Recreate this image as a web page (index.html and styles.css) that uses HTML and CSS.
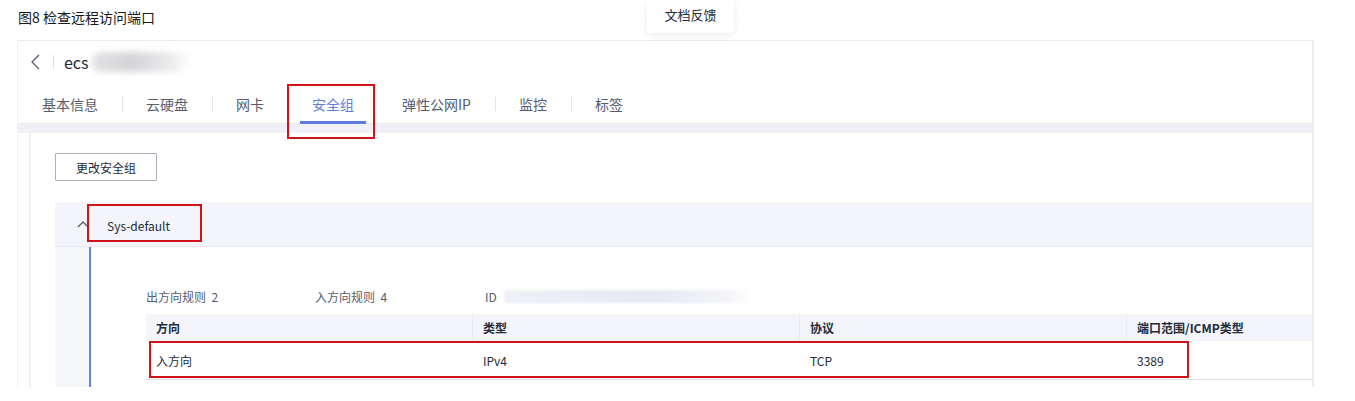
FILE: index.html
```html
<!DOCTYPE html>
<html>
<head>
<meta charset="utf-8">
<title>检查远程访问端口</title>
<link rel="stylesheet" href="styles.css">
</head>
<body>
  <div class="caption">图8 检查远程访问端口</div>
  <div class="feedback">文档反馈</div>

  <div class="frame">
    <div class="header">
      <div class="title-row">
        <svg class="back" width="12" height="16" viewBox="0 0 12 16"><path d="M9 1 L2 8 L9 15" fill="none" stroke="#575d6c" stroke-width="1.3"/></svg>
        <span class="title-divider"></span>
        <span class="ecs">ecs</span>
        <span class="blur-name"></span>
      </div>
      <div class="tabs">
        <span class="tab">基本信息</span>
        <span class="tab-divider"></span>
        <span class="tab">云硬盘</span>
        <span class="tab-divider"></span>
        <span class="tab">网卡</span>
        <span class="tab-divider hidden"></span>
        <span class="tab active">安全组</span>
        <span class="tab-divider hidden"></span>
        <span class="tab wide">弹性公网IP</span>
        <span class="tab-divider"></span>
        <span class="tab">监控</span>
        <span class="tab-divider"></span>
        <span class="tab">标签</span>
      </div>
    </div>

    <div class="band"></div>

    <div class="content">
      <button class="btn">更改安全组</button>

      <div class="group-head">
        <svg class="chevron" width="12" height="8" viewBox="0 0 12 8"><path d="M1 7 L6 2 L11 7" fill="none" stroke="#575d6c" stroke-width="1.4"/></svg>
        <span class="group-name">Sys-default</span>
      </div>

      <div class="group-body">
        <div class="group-inner">
          <div class="stats">
            <span class="stat stat-out">出方向规则&nbsp;&nbsp;2</span>
            <span class="stat stat-in">入方向规则&nbsp;&nbsp;4</span>
            <span class="stat">ID</span>
            <span class="blur-id"></span>
          </div>
          <div class="table">
            <div class="thead">
              <div class="cell">方向</div>
              <div class="cell">类型</div>
              <div class="cell">协议</div>
              <div class="cell">端口范围/ICMP类型</div>
            </div>
            <div class="trow">
              <div class="cell">入方向</div>
              <div class="cell">IPv4</div>
              <div class="cell">TCP</div>
              <div class="cell">3389</div>
            </div>
          </div>
        </div>
      </div>
    </div>
  </div>

  <div class="mark mark-tab"></div>
  <div class="mark mark-group"></div>
  <div class="mark mark-row"></div>
</body>
</html>
```

FILE: styles.css
```css
body {
  margin: 0;
  width: 1355px;
  height: 401px;
  overflow: hidden;
  position: relative;
  background: #fff;
  font-family: "Noto Sans CJK SC", "Noto Sans", sans-serif;
  color: #252b3a;
}

.caption {
  padding: 7px 0 0 18px;
  height: 33px;
  box-sizing: border-box;
  font-size: 14px;
  line-height: 20px;
  color: #191919;
}

.feedback {
  position: absolute;
  left: 647px;
  top: 0;
  width: 87px;
  height: 33px;
  background: #fff;
  border-radius: 0 0 4px 4px;
  box-shadow: 0 2px 8px rgba(0, 0, 0, 0.08);
  font-size: 13px;
  line-height: 30px;
  text-align: center;
  color: #252b3a;
}

.frame {
  margin: 7px 0 0 17px;
  width: 1297px;
  height: 347px;
  box-sizing: border-box;
  border-top: 1px solid #ebebeb;
  border-left: 1px solid #f0f0f0;
  border-right: 2px solid #ececec;
  display: flex;
  flex-direction: column;
  overflow: hidden;
}

.header {
  height: 82px;
  background: #fff;
}

.title-row {
  display: flex;
  align-items: center;
  height: 42px;
  padding-left: 12px;
}

.back {
  display: block;
}

.title-divider {
  width: 1px;
  height: 14px;
  background: #dfe1e6;
  margin: 0 10px 0 11px;
}

.ecs {
  font-size: 16px;
  color: #252b3a;
}

.blur-name {
  width: 100px;
  height: 20px;
  margin-left: 2px;
  border-radius: 10px;
  background: linear-gradient(90deg, #e4e4e6, #d4d4d7 40%, #ececee 80%, #fff);
  filter: blur(3px);
}

.tabs {
  display: flex;
  align-items: center;
  height: 40px;
  padding-left: 24px;
  padding-top: 2px;
  box-sizing: border-box;
}

.tab {
  font-size: 14px;
  line-height: 38px;
  color: #575d6c;
  position: relative;
  white-space: nowrap;
}

.tab.wide {
  width: 69px;
}

.tab.active {
  color: #5e7ce0;
}

.tab.active::after {
  content: "";
  position: absolute;
  left: -12px;
  right: -12px;
  bottom: -1px;
  height: 3px;
  background: #5e7ce0;
}

.tab-divider {
  width: 1px;
  height: 14px;
  background: #e4e5e9;
  margin: 0 23px 0 24px;
}

.tab-divider.hidden {
  background: transparent;
}

.band {
  height: 12px;
  background: #f0f1f6;
  border-top: 1px solid #e9e9ee;
}

.content {
  flex: 1;
  margin-left: 12px;
  background: #fff;
  padding: 20px 0 0 24px;
  box-shadow: -1px 0 0 #ecedf1;
  border-left: 1px solid #f3f3f6;
}

.btn {
  display: block;
  width: 102px;
  height: 28px;
  border: 1px solid #adb0b8;
  border-radius: 1px;
  background: #fff;
  font-family: inherit;
  font-size: 12px;
  color: #252b3a;
  padding: 0;
}

.group-head {
  margin-top: 21px;
  height: 44px;
  background: #f3f5fa;
  border-bottom: 1px solid #e8eaf0;
  display: flex;
  align-items: center;
  padding-left: 22px;
}

.chevron {
  display: block;
}

.group-name {
  font-size: 12px;
  margin-left: 18px;
  margin-top: 2px;
  color: #252b3a;
}

.group-body {
  display: flex;
  padding-left: 34px;
  background: #f6f7fb;
  height: 140px;
}

.group-inner {
  flex: 1;
  background: #fff;
  border-left: 2px solid #6c7fe0;
  padding: 40px 0 0 55px;
}

.stats {
  display: flex;
  align-items: center;
  height: 18px;
  font-size: 12px;
  color: #575d6c;
}

.stat-out {
  width: 169px;
}

.stat-in {
  width: 170px;
}

.blur-id {
  width: 248px;
  height: 13px;
  margin-left: 7px;
  background: linear-gradient(90deg, #eef0f6, #e6e9f2 60%, #f3f4f8 90%, #fff);
  filter: blur(1.5px);
}

.table {
  margin-top: 9px;
  font-size: 12px;
}

.thead,
.trow {
  display: grid;
  grid-template-columns: 327px 327px 327px 1fr;
}

.thead {
  height: 27px;
  background: #f3f5fa;
  font-weight: 600;
  color: #252b3a;
}

.thead .cell {
  line-height: 28px;
  border-right: 1px solid #e9ebf1;
}

.thead .cell:last-child {
  border-right: none;
}

.trow {
  height: 38px;
  border-bottom: 1px solid #dfe1e6;
  color: #252b3a;
}

.trow .cell {
  line-height: 40px;
}

.cell {
  padding-left: 10px;
}

.mark {
  position: absolute;
  border: 2px solid #d0121b;
  box-sizing: border-box;
}

.mark-tab {
  left: 287px;
  top: 84px;
  width: 88px;
  height: 55px;
}

.mark-group {
  left: 87px;
  top: 204px;
  width: 115px;
  height: 38px;
}

.mark-row {
  left: 149px;
  top: 341px;
  width: 1040px;
  height: 37px;
}
```
